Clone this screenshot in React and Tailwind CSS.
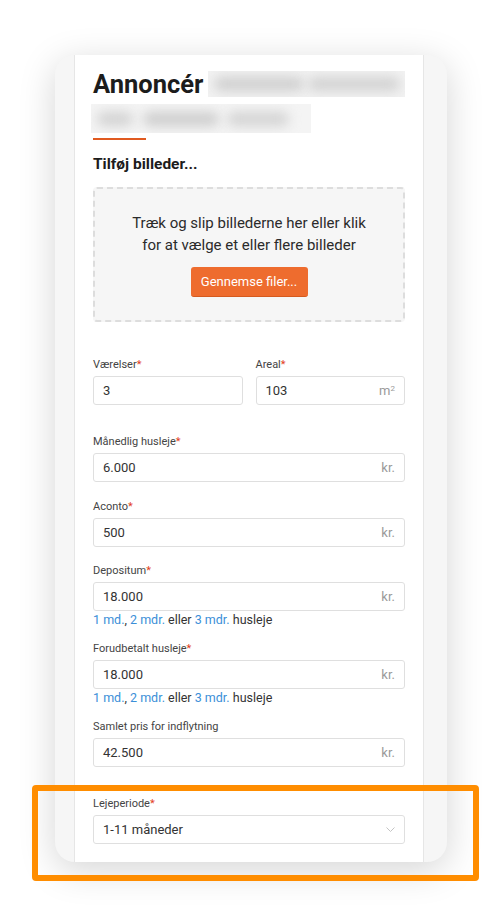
import React from "react";

function Label({ children, req }) {
  return (
    <div className="text-[11px] leading-4 text-[#444]">
      {children}
      {req && <span className="text-[#e2401c]">*</span>}
    </div>
  );
}

function Field({ label, req, value, suffix, className = "" }) {
  return (
    <div className={className}>
      <Label req={req}>{label}</Label>
      <div className="mt-[3px] flex h-[29px] items-center justify-between rounded-[3px] border border-[#dfdfdf] bg-white px-[9px] text-[13px] text-[#333]">
        <span>{value}</span>
        {suffix && <span className="text-[#9a9a9a]">{suffix}</span>}
      </div>
    </div>
  );
}

function Helper() {
  return (
    <div className="text-[12.5px] leading-[18px] text-[#333]">
      <span className="text-[#3b8fd8]">1 md.</span>,{" "}
      <span className="text-[#3b8fd8]">2 mdr.</span> eller{" "}
      <span className="text-[#3b8fd8]">3 mdr.</span> husleje
    </div>
  );
}

export default function App() {
  return (
    <div className="relative h-[918px] w-[502px] overflow-hidden bg-white font-['Roboto',sans-serif]">
      <div className="pl-[55px] pt-[55px]">
        <div className="h-[807px] w-[392px] overflow-hidden rounded-[20px] bg-[#f6f6f6] pl-[19px] shadow-[0_8px_36px_rgba(0,0,0,0.17)]">
          <div className="h-full w-[350px] border-x border-[#e6e6e6] bg-white px-[18px] pt-[13px]">
            <div className="flex h-8 items-center">
              <h1 className="text-[25.5px] font-bold leading-8 text-[#1c1c1c]">Annoncér</h1>
              <div className="relative ml-[5px] h-[26px] w-[200px] overflow-hidden bg-[#f2f2f2]">
                <div className="absolute left-[6px] top-[6px] h-[14px] w-[90px] rounded-full bg-[#cfcfcf] blur-[6px]" />
                <div className="absolute left-[100px] top-[6px] h-[14px] w-[92px] rounded-full bg-[#d2d2d2] blur-[6px]" />
              </div>
            </div>
            <div className="relative -ml-[2px] mt-[4px] h-[29px] w-[220px] overflow-hidden bg-[#f4f4f4]">
              <div className="absolute left-[6px] top-[8px] h-[14px] w-[36px] rounded-full bg-[#d2d2d2] blur-[6px]" />
              <div className="absolute left-[52px] top-[8px] h-[14px] w-[76px] rounded-full bg-[#cdcdcd] blur-[6px]" />
              <div className="absolute left-[136px] top-[8px] h-[14px] w-[62px] rounded-full bg-[#d3d3d3] blur-[6px]" />
            </div>
            <div className="mt-[5px] h-[2px] w-[53px] bg-[#e05a20]" />
            <h2 className="mt-[14px] text-[15.5px] font-bold leading-5 text-[#1c1c1c]">Tilføj billeder...</h2>

            <div className="mt-[13px] flex flex-col items-center rounded-[4px] border-2 border-dashed border-[#dddddd] bg-[#f6f6f6] pb-[23px] pt-[23px] text-center">
              <p className="text-[15px] leading-[22px] text-[#2b2b2b]">
                Træk og slip billederne her eller klik
                <br />
                for at vælge et eller flere billeder
              </p>
              <button className="mt-[11px] h-[30px] w-[117px] rounded-[3px] border-b border-[#d55a1f] bg-[#ee6c2e] text-[13px] text-white">
                Gennemse filer...
              </button>
            </div>

            <div className="mt-[35px] grid grid-cols-2 gap-[13px]">
              <Field label="Værelser" req value="3" />
              <Field
                label="Areal"
                req
                value="103"
                suffix={
                  <span>
                    m<sup className="text-[8px]">2</sup>
                  </span>
                }
              />
            </div>

            <Field className="mt-[29px]" label="Månedlig husleje" req value="6.000" suffix="kr." />
            <Field className="mt-[17px]" label="Aconto" req value="500" suffix="kr." />
            <Field className="mt-[16px]" label="Depositum" req value="18.000" suffix="kr." />
            <Helper />
            <Field className="mt-[12px]" label="Forudbetalt husleje" req value="18.000" suffix="kr." />
            <Helper />
            <Field className="mt-[12px]" label="Samlet pris for indflytning" value="42.500" suffix="kr." />

            <div className="mt-[29px]">
              <Label req>Lejeperiode</Label>
              <div className="mt-[3px] flex h-[29px] items-center justify-between rounded-[3px] border border-[#dfdfdf] bg-white px-[9px] text-[13px] text-[#333]">
                <span>1-11 måneder</span>
                <svg width="9" height="6" viewBox="0 0 9 6" fill="none">
                  <polyline points="0.5,0.5 4.5,4.5 8.5,0.5" stroke="#c4c4c4" strokeWidth="1" />
                </svg>
              </div>
            </div>
          </div>
        </div>
      </div>
      <div className="absolute left-[32px] top-[785px] h-[96px] w-[447px] rounded-[4px] border-[6px] border-[#ff8d00]" />
    </div>
  );
}
